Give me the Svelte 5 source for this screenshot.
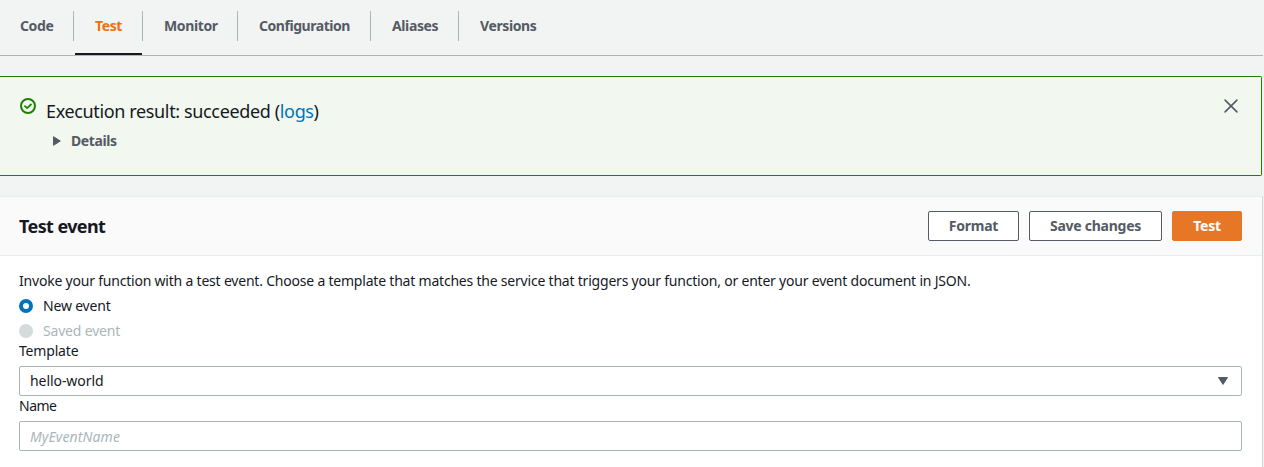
<script>
  const tabs = ['Code', 'Test', 'Monitor', 'Configuration', 'Aliases', 'Versions'];
  let active = $state('Test');
  let open = $state(false);
  let eventName = $state('');
</script>

<div class="page">
  <nav class="tabs">
    {#each tabs as tab}
      <button class="tab {tab.toLowerCase()}" class:active={tab === active} onclick={() => (active = tab)}>
        <span>{tab}</span>
      </button>
    {/each}
  </nav>

  <section class="flash">
    <svg class="status" width="16" height="16" viewBox="0 0 16 16" fill="none" stroke="#1d8102" stroke-width="2">
      <circle cx="8" cy="8" r="7" />
      <path d="M4.4 7.7 7.1 10.1 11.5 6" stroke-width="1.8" />
    </svg>
    <div class="message">
      <div class="result">Execution result: succeeded (<a href="#logs">logs</a>)</div>
      <button class="details" aria-expanded={open} onclick={() => (open = !open)}>
        <svg width="10" height="12" viewBox="0 0 10 12"><path d="M1.5 1.7 8.3 6 1.5 10.3Z" fill="#545b64" stroke="#545b64" stroke-linejoin="round" /></svg>
        <span>Details</span>
      </button>
    </div>
    <button class="close" aria-label="Close">
      <svg width="14" height="14" viewBox="0 0 14 14" stroke="#545b64" stroke-width="1.6" stroke-linecap="round"><path d="M1.1 1.1 12.9 12.9M12.9 1.1 1.1 12.9" /></svg>
    </button>
  </section>

  <section class="card">
    <header>
      <h2>Test event</h2>
      <div class="actions">
        <button class="btn format">Format</button>
        <button class="btn save">Save changes</button>
        <button class="btn primary">Test</button>
      </div>
    </header>
    <div class="body">
      <p>Invoke your function with a test event. Choose a template that matches the service that triggers your function, or enter your event document in JSON.</p>
      <div class="radio"><span class="dot on"></span>New event</div>
      <div class="radio disabled"><span class="dot"></span>Saved event</div>
      <div class="label">Template</div>
      <div class="field select">
        <span>hello-world</span>
        <svg width="12" height="10" viewBox="0 0 12 10"><path d="M1.5 1.5H10.5L6 8.4Z" fill="#545b64" stroke="#545b64" stroke-linejoin="round" /></svg>
      </div>
      <div class="label name">Name</div>
      <input class="field" placeholder="MyEventName" bind:value={eventName} />
    </div>
  </section>
</div>

<style>
  :global(body) {
    background: #f2f3f3;
  }
  .page {
    box-sizing: border-box;
    height: 467px;
    overflow: hidden;
    display: flex;
    flex-direction: column;
    font: 14px/20px 'Noto Sans', sans-serif;
    letter-spacing: -0.18px;
    color: #16191f;
    background: #f2f3f3;
  }
  button {
    font: inherit;
    letter-spacing: inherit;
    border: 0;
    padding: 0;
    background: none;
    color: #545b64;
    font-weight: 700;
    cursor: pointer;
  }
  .tabs {
    display: flex;
    flex: none;
    box-sizing: border-box;
    width: 1263px;
    height: 56px;
    border-bottom: 1px solid #aab7b8;
  }
  .tab {
    box-sizing: border-box;
    height: 55px;
    padding: 11px 0 14px;
    letter-spacing: -0.38px;
    text-align: left;
  }
  .tab span {
    display: block;
    box-sizing: border-box;
    height: 30px;
    padding: 5px 0 0 21px;
    border-right: 1px solid #aab7b8;
  }
  .tab.code span { padding-left: 20px; }
  .code { width: 74px; }
  .test { width: 69px; }
  .monitor { width: 95px; }
  .configuration { width: 133px; letter-spacing: -0.45px; }
  .aliases { width: 88px; }
  .versions { width: 98px; }
  .tab.versions span { border-right: 0; }
  .active {
    color: #ec7211;
    background: linear-gradient(#16191f, #16191f) 1px 53px / 67px 2px no-repeat;
  }
  .flash {
    display: flex;
    flex: none;
    box-sizing: border-box;
    width: 1262px;
    height: 100px;
    margin-top: 20px;
    padding: 21px 23px 0 20px;
    border: 1px solid #1d8102;
    border-left: 0;
    border-radius: 0 2px 2px 0;
    background: #f2f8f0;
  }
  .status {
    flex: none;
  }
  .message {
    flex: 1;
    padding-left: 10px;
  }
  .result {
    font-size: 18px;
    line-height: 26px;
    letter-spacing: -0.36px;
  }
  a {
    color: #0073bb;
    text-decoration: none;
  }
  .details {
    display: flex;
    align-items: center;
    gap: 9px;
    margin: 7px 0 0 6px;
    letter-spacing: -0.42px;
  }
  .close {
    width: 14px;
    height: 14px;
    margin-top: 1px;
  }
  svg {
    display: block;
  }
  .card {
    flex: 1;
    box-sizing: border-box;
    width: 1263px;
    margin-top: 20px;
    border-top: 1px solid #eaeded;
    border-right: 1px solid #d0d6d6;
    background: #fff;
  }
  header {
    display: flex;
    justify-content: space-between;
    align-items: center;
    box-sizing: border-box;
    height: 59px;
    padding: 0 20px 0 19px;
    border-bottom: 1px solid #eaeded;
    background: #fafafa;
  }
  h2 {
    margin: 0;
    font-size: 18px;
    line-height: 24px;
    letter-spacing: -0.6px;
  }
  .actions {
    display: flex;
    gap: 10px;
  }
  .btn {
    box-sizing: border-box;
    height: 30px;
    border: 1px solid #545b64;
    border-radius: 2px;
    background: #fff;
    letter-spacing: -0.25px;
  }
  .format { width: 91px; }
  .save { width: 133px; }
  .primary {
    width: 70px;
    color: #fff;
    background: #e77726;
    border-color: #e77726;
  }
  .body {
    padding: 15px 20px 0 19px;
  }
  p {
    margin: 0 0 5px;
    letter-spacing: -0.208px;
    white-space: nowrap;
  }
  .radio {
    display: flex;
    align-items: center;
    gap: 10px;
    margin-bottom: 5px;
  }
  .disabled {
    margin-bottom: 0;
    color: #aab7b8;
  }
  .dot {
    box-sizing: border-box;
    width: 14px;
    height: 14px;
    border-radius: 50%;
    background: #d5dbdb;
  }
  .on {
    border: 4px solid #0073bb;
    background: #fff;
  }
  .label {
    height: 25px;
  }
  .name {
    letter-spacing: -0.5px;
  }
  .field {
    display: flex;
    align-items: center;
    justify-content: space-between;
    box-sizing: border-box;
    width: 1223px;
    height: 30px;
    margin: 0;
    padding: 0 12px 0 10px;
    border: 1px solid #aab7b8;
    border-radius: 2px;
    background: #fff;
    color: #16191f;
    font: inherit;
    letter-spacing: -0.07px;
  }
  input::placeholder {
    color: #aab7b8;
    font-style: italic;
    letter-spacing: 0.1px;
  }
</style>
